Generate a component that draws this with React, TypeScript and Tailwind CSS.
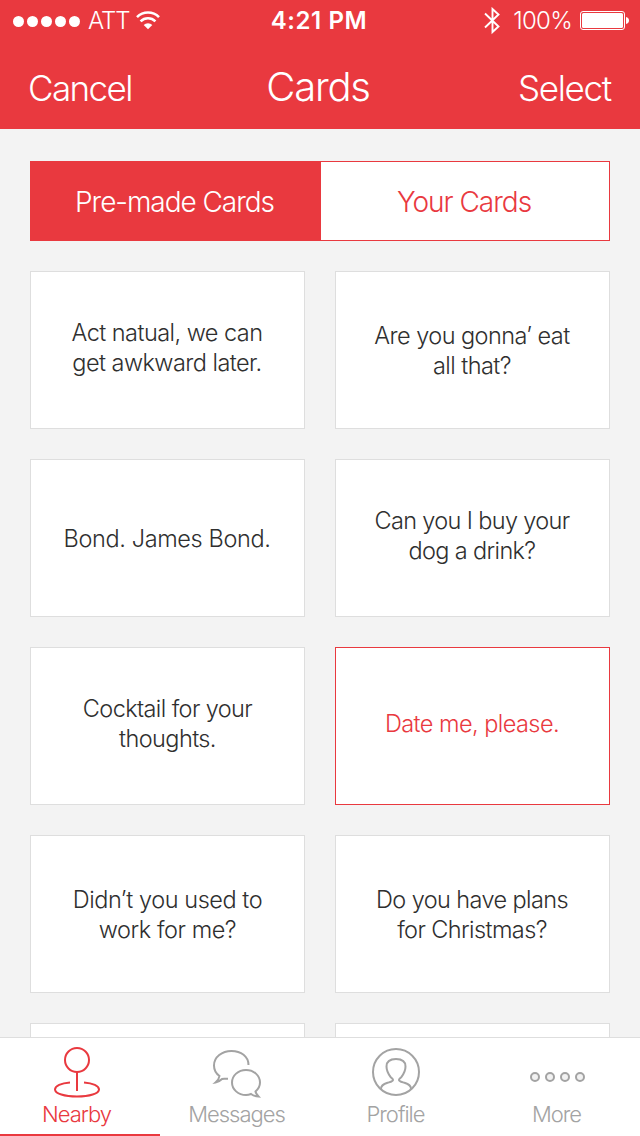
import React from 'react';
import clsx from 'clsx';

type Card = {
  lines: string[];
  className?: string;
  selected?: boolean;
};

const cards: Card[] = [
  { lines: ['Act natual, we can', 'get awkward later.'], className: 'pb-1 pr-px tracking-[-0.55px]' },
  { lines: ['Are you gonna’ eat', 'all that?'], className: 'pt-0.5 pr-px tracking-[-0.55px]' },
  { lines: ['Bond. James Bond.'], className: 'pt-0.5 pr-px tracking-[-0.38px]' },
  { lines: ['Can you I buy your', 'dog a drink?'], className: 'pb-1 pr-px tracking-[-0.65px]' },
  { lines: ['Cocktail for your', 'thoughts.'], className: 'pb-1 tracking-[-0.6px]' },
  { lines: ['Date me, please.'], className: 'pb-1 pr-px tracking-[-0.55px]', selected: true },
  { lines: ['Didn’t you used to', 'work for me?'], className: 'pt-0.5 tracking-[-0.45px]' },
  { lines: ['Do you have plans', 'for Christmas?'], className: 'pt-0.5 pr-px tracking-[-0.6px]' },
  { lines: [] },
  { lines: [] },
];

const WifiIcon = () => (
  <svg width="24" height="20" viewBox="0 0 24 20" fill="none" stroke="currentColor" strokeWidth="2.6">
    <path d="M1 6.1a15.6 15.6 0 0 1 22 0" />
    <path d="M4.6 10.300a10.500 10.500 0 0 1 14.800 0" />
    <path d="M12 18.300l-4.300-4.300a6.100 6.100 0 0 1 8.600 0z" fill="currentColor" stroke="none" />
  </svg>
);

const BluetoothIcon = () => (
  <svg width="16" height="28" viewBox="0 0 16 28" fill="none" stroke="currentColor" strokeWidth="1.9">
    <path d="M1 6.500l13.500 13-6 5.500V2l6 5.500L1 20.500" />
  </svg>
);

const BatteryIcon = () => (
  <svg width="49" height="20" viewBox="0 0 49 20">
    <rect x="0.5" y="0.5" width="44" height="18" rx="2.5" fill="none" stroke="currentColor" />
    <rect x="2" y="2" width="41" height="15" rx="1.5" fill="currentColor" />
    <path d="M46 6c2 .4 3 1.800 3 3.500s-1 3.100-3 3.500z" fill="currentColor" />
  </svg>
);

const NearbyIcon = () => (
  <svg width="48" height="52" viewBox="0 0 48 52" fill="none" stroke="currentColor" strokeWidth="2">
    <circle cx="24" cy="13" r="12" />
    <path d="M24 25v19" />
    <path d="M17 35.500C8 36.200 2 39 2 42.500 2 46.600 11.500 49.500 24 49.500s22-2.900 22-7c0-3.500-6-6.300-15-7" />
  </svg>
);

const MessagesIcon = () => (
  <svg width="50" height="50" viewBox="0 0 50 50" fill="none" stroke="currentColor" strokeWidth="2">
    <path d="M36.500 16C36.500 7.500 29 2 19.500 2S2 8 2 16.500c0 4.500 2 8 5.500 10.500-.3 2.500-1.800 4.500-4 6.500 3-.5 4.500-1.500 6.500-3.500 1.500-.7 3.300-.2 6-.2" />
    <path d="M43.500 42.500c2.800-2.500 4.500-5.500 4.500-9C48 26.500 41.800 21 34 21s-14 5.500-14 12.500S26.200 46 34 46c1.800 0 3.500-.4 5-1 2 1.500 4.500 2.300 7.500 2.500-1.500-1.500-2.700-3-3-5z" />
  </svg>
);

const ProfileIcon = () => (
  <svg width="48" height="48" viewBox="0 0 48 48" fill="none" stroke="currentColor" strokeWidth="2">
    <circle cx="24" cy="24" r="23" />
    <path d="M9 41c0-3.500 2.500-5 6.500-6.200 3-.9 5.500-1.300 5.500-2.800 0-1.200-1.200-1.500-2.500-3.200-2.500-3.300-4-6.300-4-10.300 0-5 3.500-7.500 9.500-7.500s9.500 2.500 9.500 7.500c0 4-1.500 7-4 10.300-1.300 1.700-2.500 2-2.500 3.200 0 1.500 2.500 1.900 5.500 2.800 4 1.200 6.500 2.700 6.500 6.200" />
  </svg>
);

const MoreIcon = () => (
  <svg width="56" height="10" viewBox="0 0 56 10" fill="#f2f2f2" stroke="currentColor" strokeWidth="2">
    <circle cx="5" cy="5" r="4" />
    <circle cx="20" cy="5" r="4" />
    <circle cx="35" cy="5" r="4" />
    <circle cx="50" cy="5" r="4" />
  </svg>
);

const tabs = [
  { label: 'Nearby', icon: <NearbyIcon />, active: true, iconClass: 'pt-2 pr-1.5', labelClass: 'pr-[7px]' },
  { label: 'Messages', icon: <MessagesIcon />, iconClass: 'pt-2.5 pr-1.5', labelClass: 'pr-[7px]' },
  { label: 'Profile', icon: <ProfileIcon />, iconClass: 'pt-1.5 pr-2', labelClass: 'pr-[9px]' },
  { label: 'More', icon: <MoreIcon />, iconClass: 'pt-4 pr-[5px]', labelClass: 'pr-[7px]' },
];

const StatusBar = () => (
  <div className="flex h-[42px] items-center justify-between pl-[13px] pr-[11px] text-2xl leading-10">
    <div className="flex flex-1 items-center">
      <div className="flex gap-[3px]">
        {[0, 1, 2, 3, 4].map((dot) => (
          <span key={dot} className="size-[11px] rounded-full bg-white" />
        ))}
      </div>
      <span className="ml-2 mr-[7px] tracking-[-1.1px]">ATT</span>
      <WifiIcon />
    </div>
    <span className="mr-[4px] font-semibold tracking-[0.6px]">4:21 PM</span>
    <div className="flex flex-1 items-center justify-end">
      <BluetoothIcon />
      <span className="ml-[13px] mr-2 tracking-[-0.7px]">100%</span>
      <BatteryIcon />
    </div>
  </div>
);

const App: React.FC = () => {
  return (
    <div className="flex h-[1136px] w-[640px] flex-col overflow-hidden bg-[#f3f3f3] font-['Inter','Liberation_Sans',sans-serif] font-light">
      <header className="h-[129px] shrink-0 bg-[#e9393f] text-white">
        <StatusBar />
        <div className="grid h-[87px] grid-cols-3 items-center px-7 pt-1">
          <button className="pt-0.5 text-left text-[35px] leading-none tracking-[-1.6px]">Cancel</button>
          <h1 className="pr-[4px] pb-0.5 text-center text-[40px] leading-none tracking-[-1.2px]">Cards</h1>
          <button className="pt-0.5 pr-px text-right text-[35px] leading-none tracking-[-1.3px]">Select</button>
        </div>
      </header>

      <main className="min-h-0 flex-1 overflow-hidden px-[30px] pt-8">
        <div className="flex h-20 border border-[#e9393f] bg-white text-[28px]">
          <button className="w-[290px] bg-[#e9393f] pt-0.5 pr-[3px] tracking-[-1.05px] text-white">Pre-made Cards</button>
          <button className="flex-1 pt-0.5 pr-0.5 tracking-[-1px] text-[#e9393f]">Your Cards</button>
        </div>

        <div className="mt-[30px] grid grid-cols-2 gap-[30px]">
          {cards.map((card, index) => (
            <div
              key={index}
              className={clsx(
                'flex h-[158px] flex-col items-center justify-center border bg-white text-[23.5px] leading-[30px]',
                card.selected ? 'border-[#e9393f] text-[#e9393f]' : 'border-[#dedede] text-[#2f2f2f]',
                card.className
              )}
            >
              {card.lines.map((line) => (
                <span key={line}>{line}</span>
              ))}
            </div>
          ))}
        </div>
      </main>

      <nav className="grid h-[99px] shrink-0 grid-cols-4 border-t border-[#dedede] bg-white">
        {tabs.map((tab) => (
          <button
            key={tab.label}
            className={clsx(
              'flex flex-col items-center border-b-2',
              tab.active ? 'border-[#e9393f] text-[#e9393f]' : 'border-transparent text-[#a3a3a3]'
            )}
          >
            <span className={clsx('flex h-[61px] items-center', tab.iconClass)}>{tab.icon}</span>
            <span className={clsx('text-[22px] leading-[30px] tracking-[-1px]', tab.labelClass)}>{tab.label}</span>
          </button>
        ))}
      </nav>
    </div>
  );
};

export default App;
